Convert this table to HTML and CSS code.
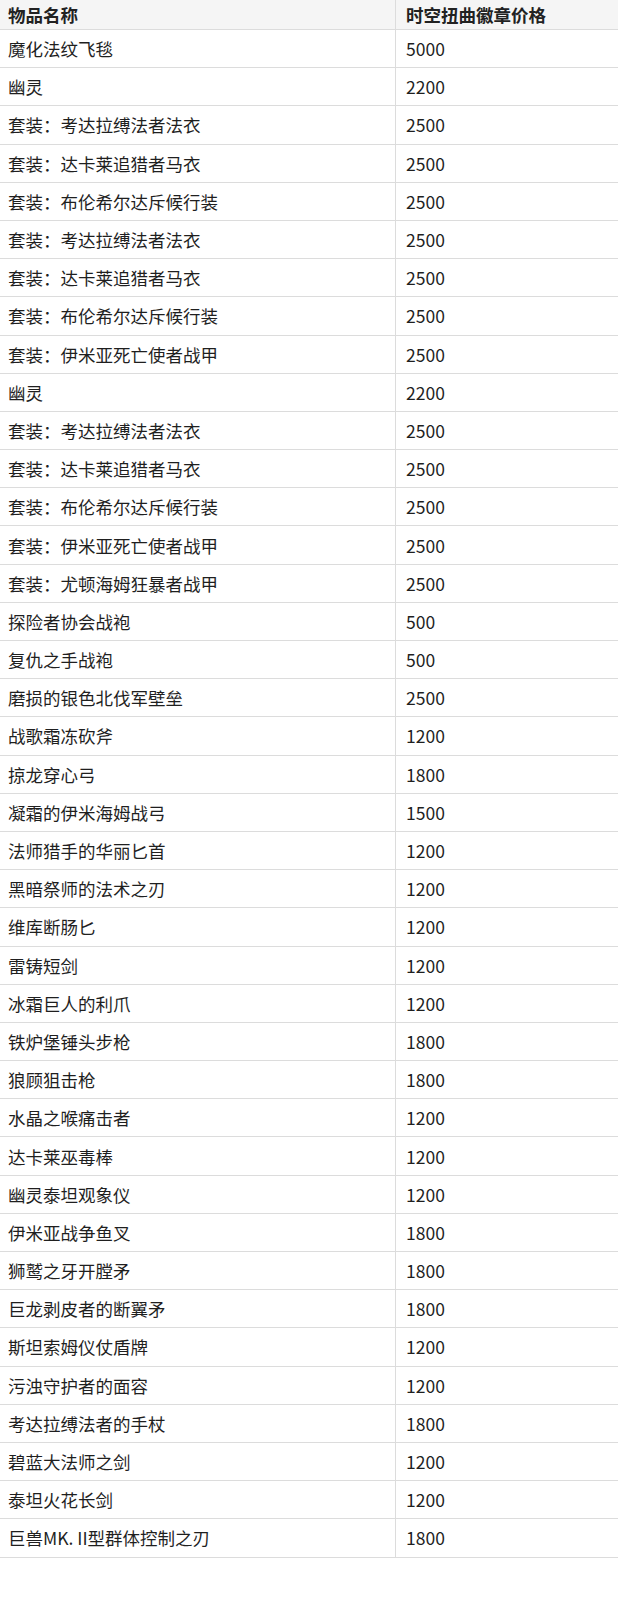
FILE: index.html
```html
<!DOCTYPE html>
<html lang="zh-CN">
<head>
<meta charset="utf-8">
<title>物品价格</title>
<link rel="stylesheet" href="styles.css">
</head>
<body>
<table class="price-table">
  <thead>
    <tr><th class="col-name">物品名称</th><th class="col-price">时空扭曲徽章价格</th></tr>
  </thead>
  <tbody>
    <tr><td>魔化法纹飞毯</td><td>5000</td></tr>
    <tr><td>幽灵</td><td>2200</td></tr>
    <tr><td>套装：考达拉缚法者法衣</td><td>2500</td></tr>
    <tr><td>套装：达卡莱追猎者马衣</td><td>2500</td></tr>
    <tr><td>套装：布伦希尔达斥候行装</td><td>2500</td></tr>
    <tr><td>套装：考达拉缚法者法衣</td><td>2500</td></tr>
    <tr><td>套装：达卡莱追猎者马衣</td><td>2500</td></tr>
    <tr><td>套装：布伦希尔达斥候行装</td><td>2500</td></tr>
    <tr><td>套装：伊米亚死亡使者战甲</td><td>2500</td></tr>
    <tr><td>幽灵</td><td>2200</td></tr>
    <tr><td>套装：考达拉缚法者法衣</td><td>2500</td></tr>
    <tr><td>套装：达卡莱追猎者马衣</td><td>2500</td></tr>
    <tr><td>套装：布伦希尔达斥候行装</td><td>2500</td></tr>
    <tr><td>套装：伊米亚死亡使者战甲</td><td>2500</td></tr>
    <tr><td>套装：尤顿海姆狂暴者战甲</td><td>2500</td></tr>
    <tr><td>探险者协会战袍</td><td>500</td></tr>
    <tr><td>复仇之手战袍</td><td>500</td></tr>
    <tr><td>磨损的银色北伐军壁垒</td><td>2500</td></tr>
    <tr><td>战歌霜冻砍斧</td><td>1200</td></tr>
    <tr><td>掠龙穿心弓</td><td>1800</td></tr>
    <tr><td>凝霜的伊米海姆战弓</td><td>1500</td></tr>
    <tr><td>法师猎手的华丽匕首</td><td>1200</td></tr>
    <tr><td>黑暗祭师的法术之刃</td><td>1200</td></tr>
    <tr><td>维库断肠匕</td><td>1200</td></tr>
    <tr><td>雷铸短剑</td><td>1200</td></tr>
    <tr><td>冰霜巨人的利爪</td><td>1200</td></tr>
    <tr><td>铁炉堡锤头步枪</td><td>1800</td></tr>
    <tr><td>狼顾狙击枪</td><td>1800</td></tr>
    <tr><td>水晶之喉痛击者</td><td>1200</td></tr>
    <tr><td>达卡莱巫毒棒</td><td>1200</td></tr>
    <tr><td>幽灵泰坦观象仪</td><td>1200</td></tr>
    <tr><td>伊米亚战争鱼叉</td><td>1800</td></tr>
    <tr><td>狮鹫之牙开膛矛</td><td>1800</td></tr>
    <tr><td>巨龙剥皮者的断翼矛</td><td>1800</td></tr>
    <tr><td>斯坦索姆仪仗盾牌</td><td>1200</td></tr>
    <tr><td>污浊守护者的面容</td><td>1200</td></tr>
    <tr><td>考达拉缚法者的手杖</td><td>1800</td></tr>
    <tr><td>碧蓝大法师之剑</td><td>1200</td></tr>
    <tr><td>泰坦火花长剑</td><td>1200</td></tr>
    <tr><td>巨兽MK. II型群体控制之刃</td><td>1800</td></tr>
  </tbody>
</table>
</body>
</html>
```

FILE: styles.css
```css
html, body {
  margin: 0;
  padding: 0;
  background: #ffffff;
}

body {
  font-family: "Noto Sans CJK SC", "Noto Sans", sans-serif;
  font-size: 17.5px;
  color: #1f1f1f;
}

.price-table {
  width: 618px;
  border-collapse: collapse;
  table-layout: fixed;
}

.price-table th,
.price-table td {
  text-align: left;
  vertical-align: middle;
  padding: 0 0 0 8px;
  border-bottom: 1px solid #dcdcdc;
  white-space: nowrap;
  line-height: 1.2;
}

.price-table th {
  height: 29px;
  background: #f5f5f5;
  font-weight: 700;
  color: #222;
}

.price-table td {
  height: 37.2px;
}

.price-table .col-name {
  width: 387px;
}

.price-table th:first-child,
.price-table td:first-child {
  border-right: 1px solid #dcdcdc;
}

.price-table th:last-child,
.price-table td:last-child {
  padding-left: 10px;
}
```
